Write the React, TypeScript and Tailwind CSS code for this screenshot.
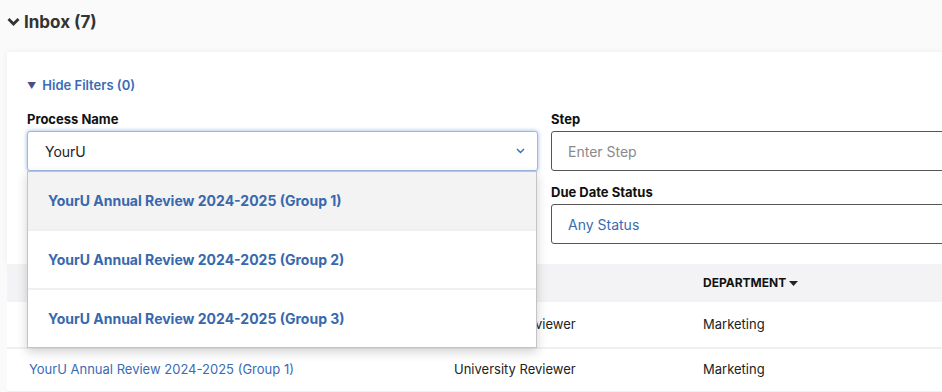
import React from "react";

const options = [
  "YourU Annual Review 2024-2025 (Group 1)",
  "YourU Annual Review 2024-2025 (Group 2)",
  "YourU Annual Review 2024-2025 (Group 3)",
];

// first row's name sits under the open dropdown
const rows = [
  { name: "", step: "University Reviewer", dept: "Marketing" },
  { name: "YourU Annual Review 2024-2025 (Group 1)", step: "University Reviewer", dept: "Marketing" },
];

const Label = ({ children }: { children: React.ReactNode }) => (
  <div className="text-[13px] font-bold leading-4 text-[#111] mb-[4px]">{children}</div>
);

const ProcessSelect = () => (
  <div className="relative">
    <div className="h-10 flex items-center justify-between pl-[17px] pr-[12px] rounded-[3px] border border-[#9bb8e3] bg-white shadow-[0_0_4px_rgba(70,120,200,0.55)]">
      <span className="text-[14px] text-[#222] pt-[1px]">YourU</span>
      <svg width="9" height="6" viewBox="0 0 9 6" fill="none">
        <path d="M1 1l3.5 3.5L8 1" stroke="#3a6bb5" strokeWidth="1.4" />
      </svg>
    </div>
    {/* open dropdown */}
    <div className="absolute left-0 right-[1px] top-full z-10 bg-white border border-[#c4c4c4] shadow-[0_4px_10px_rgba(0,0,0,0.18)]">
      {options.map((o, i) => (
        <div
          key={o}
          className={`flex items-center pl-[20px] text-[14px] font-bold text-[#3868ad] ${i === 0 ? "h-[57px] bg-[#f3f3f3]" : "h-[59px] bg-white border-t-2 border-[#f0f0f0]"}`}
        >
          {o}
        </div>
      ))}
    </div>
  </div>
);

const TextInput = ({ value, blue }: { value: string; blue?: boolean }) => (
  <div className="h-10 flex items-center pl-[16px] pt-[1px] rounded-[3px] border border-[#555] bg-white">
    <span className={`text-[14px] ${blue ? "text-[#3a6bb5]" : "text-[#8a8a8a]"}`}>{value}</span>
  </div>
);

export default function App() {
  return (
    <div
      className="w-[942px] h-[392px] overflow-hidden bg-[#fafafa]"
      style={{ fontFamily: "Inter, 'Noto Sans', sans-serif" }}
    >
      <div className="w-[1200px]">
        <div className="h-[52px] pl-[7px] pt-[10px] flex items-start gap-[4px]">
          <svg width="13" height="24" viewBox="0 0 13 24" fill="none">
            <path d="M1.5 9l5 5 5-5" stroke="#333" strokeWidth="2.8" />
          </svg>
          <span className="text-[17px] font-bold leading-6 text-[#333]">Inbox (7)</span>
        </div>

        <div className="ml-[7px] bg-white shadow-[0_0_6px_rgba(0,0,0,0.06)]">
          <div className="pt-[25px] pb-[20px] px-[20px]">
            <div className="flex items-center gap-[6px] h-[18px] text-[13px] font-semibold text-[#3a6bb5]">
              <span className="text-[9px] text-[#4a4a8c]">▼</span>
              Hide Filters (0)
            </div>
            <div className="mt-[16px] grid grid-cols-[511px_511px] gap-x-[13px] gap-y-[13px]">
              <div>
                <Label>Process Name</Label>
                <ProcessSelect />
              </div>
              <div>
                <Label>Step</Label>
                <TextInput value="Enter Step" />
              </div>
              <div />
              <div>
                <Label>Due Date Status</Label>
                <TextInput value="Any Status" blue />
              </div>
            </div>
          </div>
        </div>

        <div className="ml-[7px] bg-white">
          <div className="h-[38px] bg-[#f3f3f5] flex items-center text-[12px] font-bold text-[#111]">
            <div className="w-[447px] pl-[22px]">PROCESS NAME</div>
            <div className="w-[249px]">STEP</div>
            <div className="flex items-center gap-[3px]">
              DEPARTMENT
              <svg width="9" height="5" viewBox="0 0 9 5">
                <path d="M0 0h9L4.5 5z" fill="#222" />
              </svg>
            </div>
          </div>
          {rows.map((r, i) => (
            <div
              key={i}
              className={`flex items-center text-[13px] border-b-2 border-[#f0f0f2] ${i === 0 ? "h-[47px]" : "h-[44px]"}`}
            >
              <div className="w-[447px] pl-[22px] text-[#3a6bb5]">{r.name}</div>
              <div className="w-[249px] text-[#222]">{r.step}</div>
              <div className="text-[#222]">{r.dept}</div>
            </div>
          ))}
        </div>
      </div>
    </div>
  );
}
